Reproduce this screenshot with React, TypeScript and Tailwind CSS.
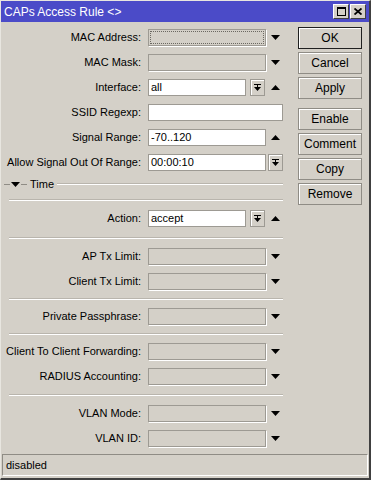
import React from "react";

const DownTri = () => (
  <svg width="9" height="5" viewBox="0 0 9 5"><polygon points="0,0 9,0 4.5,5" fill="#000" /></svg>
);
const UpTri = () => (
  <svg width="9" height="5" viewBox="0 0 9 5"><polygon points="0,5 9,5 4.5,0" fill="#000" /></svg>
);
const ComboBtn = () => (
  <div className="w-[15px] h-[17px] flex items-center justify-center border border-[#9d9a93] bg-[#d4d0c8] shadow-[inset_1px_1px_0_#fff]">
    <svg width="7" height="7" viewBox="0 0 7 7">
      <rect x="0" y="0" width="7" height="1" fill="#000" />
      <rect x="3" y="1" width="1" height="2" fill="#000" />
      <polygon points="0,3 7,3 3.5,7" fill="#000" />
    </svg>
  </div>
);

type RowProps = {
  label: string;
  value?: string;
  kind: "disabled" | "white" | "combo" | "wide" | "focus";
  after?: "down" | "up" | "combo" | "none";
};

const Row = ({ label, value, kind, after = "down" }: RowProps) => {
  let field: React.ReactNode;
  if (kind === "wide") {
    field = <div className="w-[135px] h-[17px] bg-white border border-[#9d9a93]" />;
  } else if (kind === "combo") {
    field = (
      <div className="w-[118px] h-[17px] flex items-center">
        <div className="w-[98px] h-[17px] bg-white border border-[#9d9a93] flex items-center pl-[2px]">{value}</div>
        <div className="ml-[4px]"><ComboBtn /></div>
      </div>
    );
  } else if (kind === "white") {
    field = (
      <div className="w-[118px] h-[17px] bg-white border border-[#9d9a93] flex items-center pl-[2px]">{value}</div>
    );
  } else if (kind === "focus") {
    field = (
      <div className="w-[118px] h-[17px] border border-[#9d9a93] shadow-[1px_1px_0_#fff] p-[1px]">
        <div className="w-full h-full border border-dotted border-[#6b6861]" />
      </div>
    );
  } else {
    field = <div className="w-[118px] h-[17px] border border-[#9d9a93] shadow-[1px_1px_0_#fff]" />;
  }
  return (
    <div className="h-[25px] flex items-center">
      <div className="w-[140px] text-right whitespace-nowrap">{label}</div>
      <div className="ml-[7px]">{field}</div>
      {kind !== "wide" && (
        <div className="w-[17px] flex items-center justify-center ml-[1px]">
          {after === "down" && <DownTri />}
          {after === "up" && <UpTri />}
          {after === "combo" && <ComboBtn />}
        </div>
      )}
    </div>
  );
};

const Sep = ({ h = "h-[11px]" }: { h?: string }) => (
  <div className={`${h} flex items-center pl-[8px] pr-[8px]`}>
    <div className="w-full h-0 border-t border-[#b9b5ad] border-b border-b-white" />
  </div>
);

const Btn = ({ label, def }: { label: string; def?: boolean }) => (
  <div
    className={`w-[64px] h-[22px] flex items-center justify-center bg-[#d4d0c8] text-[12px] ${
      def ? "border border-[#202020]" : "border border-[#8f8c85]"
    } shadow-[inset_1px_1px_0_#fff]`}
  >
    {label}
  </div>
);

export default function App() {
  return (
    <div
      className="w-[371px] h-[480px] bg-[#d4d0c8] flex flex-col text-[11px] text-black border-r-2 border-b-2 border-r-[#404040] border-b-[#404040] border-l border-t border-l-[#e8e6e0] border-t-[#e8e6e0] overflow-hidden"
      style={{ fontFamily: '"Liberation Sans", Arial, sans-serif' }}
    >
      <div className="h-[21px] bg-[#4b4bc8] flex items-center justify-between pl-[3px] pr-[3px] shrink-0">
        <span className="text-white text-[12px]">CAPs Access Rule &lt;&gt;</span>
        <div className="flex gap-[1px]">
          <div className="w-[16px] h-[15px] bg-[#d4d0c8] border border-t-white border-l-white border-r-[#404040] border-b-[#404040] flex items-center justify-center">
            <div className="w-[9px] h-[9px] border border-black border-t-2" />
          </div>
          <div className="w-[16px] h-[15px] bg-[#d4d0c8] border border-t-white border-l-white border-r-[#404040] border-b-[#404040] flex items-center justify-center">
            <svg width="8" height="7" viewBox="0 0 8 7">
              <path d="M0.5 0.5 L7.5 6.5 M7.5 0.5 L0.5 6.5" stroke="#000" strokeWidth="1.8" />
            </svg>
          </div>
        </div>
      </div>
      <div className="flex flex-1">
        <div className="w-[290px] pt-[3px]">
          <Row label="MAC Address:" kind="focus" />
          <Row label="MAC Mask:" kind="disabled" />
          <Row label="Interface:" kind="combo" value="all" after="up" />
          <Row label="SSID Regexp:" kind="wide" />
          <Row label="Signal Range:" kind="white" value="-70..120" after="up" />
          <Row label="Allow Signal Out Of Range:" kind="white" value="00:00:10" after="combo" />
          <div className="h-[18px] flex items-center pl-[3px] pr-[8px]">
            <div className="w-[6px] border-t border-[#8f8c85]" />
            <div className="mx-[1px]"><DownTri /></div>
            <div className="w-[6px] border-t border-[#8f8c85]" />
            <span className="mx-[3px]">Time</span>
            <div className="flex-1 h-0 border-t border-[#b9b5ad] border-b border-b-white" />
          </div>
          <Sep h="h-[13px]" />
          <Row label="Action:" kind="combo" value="accept" after="up" />
          <Sep h="h-[13px]" />
          <Row label="AP Tx Limit:" kind="disabled" />
          <Row label="Client Tx Limit:" kind="disabled" />
          <Sep h="h-[10px]" />
          <Row label="Private Passphrase:" kind="disabled" />
          <Sep h="h-[10px]" />
          <Row label="Client To Client Forwarding:" kind="disabled" />
          <Row label="RADIUS Accounting:" kind="disabled" />
          <Sep h="h-[12px]" />
          <Row label="VLAN Mode:" kind="disabled" />
          <Row label="VLAN ID:" kind="disabled" />
        </div>
        <div className="flex flex-col pt-[5px] pl-[7px]">
          <div className="flex flex-col gap-[3px]">
            <Btn label="OK" def />
            <Btn label="Cancel" />
            <Btn label="Apply" />
          </div>
          <div className="flex flex-col gap-[3px] mt-[9px]">
            <Btn label="Enable" />
            <Btn label="Comment" />
            <Btn label="Copy" />
            <Btn label="Remove" />
          </div>
        </div>
      </div>
      <div className="h-[22px] mx-[1px] mb-[2px] border border-t-[#8f8c85] border-l-[#8f8c85] border-r-white border-b-white flex items-center pl-[3px] shrink-0">
        disabled
      </div>
    </div>
  );
}
